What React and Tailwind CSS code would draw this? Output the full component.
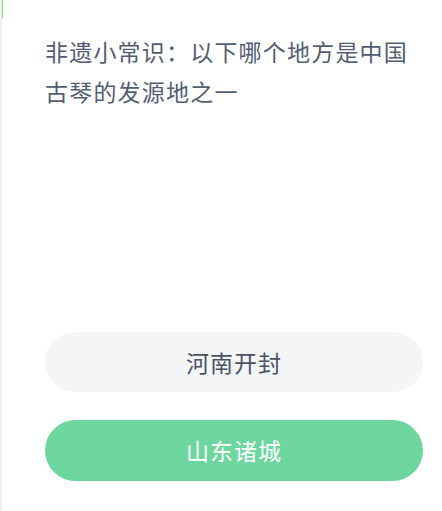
import React from "react";

const options = [
  { label: "河南开封", correct: false },
  { label: "山东诸城", correct: true },
];

export default function App() {
  return (
    <div
      className="relative w-[442px] h-[511px] bg-white border-l-2 border-[#eef0ee] overflow-hidden"
      style={{ fontFamily: '"Noto Sans CJK SC", "Noto Sans", sans-serif' }}
    >
      <span className="absolute left-[-2px] top-0 w-[3px] h-[18px] bg-[#8fdc6e]" />
      <div className="flex flex-col h-full pl-[43px] pr-[19px] pt-[31px]">
        <p className="text-[23px] leading-[40px] tracking-[1.2px] text-[#525c72]">
          非遗小常识：以下哪个地方是中国
          <br />
          古琴的发源地之一
        </p>
        <div className="flex flex-col gap-[28px] mt-auto mb-[30px]">
          {options.map(o => (
            <div
              key={o.label}
              className={
                o.correct
                  ? "h-[61px] rounded-full bg-[#6cd69e] text-white flex items-center justify-center text-[23px] tracking-[1px]"
                  : "h-[60px] rounded-full bg-[#f3f5f7] text-[#4a5263] flex items-center justify-center text-[23px] tracking-[1px]"
              }
            >
              {o.label}
            </div>
          ))}
        </div>
      </div>
    </div>
  );
}
